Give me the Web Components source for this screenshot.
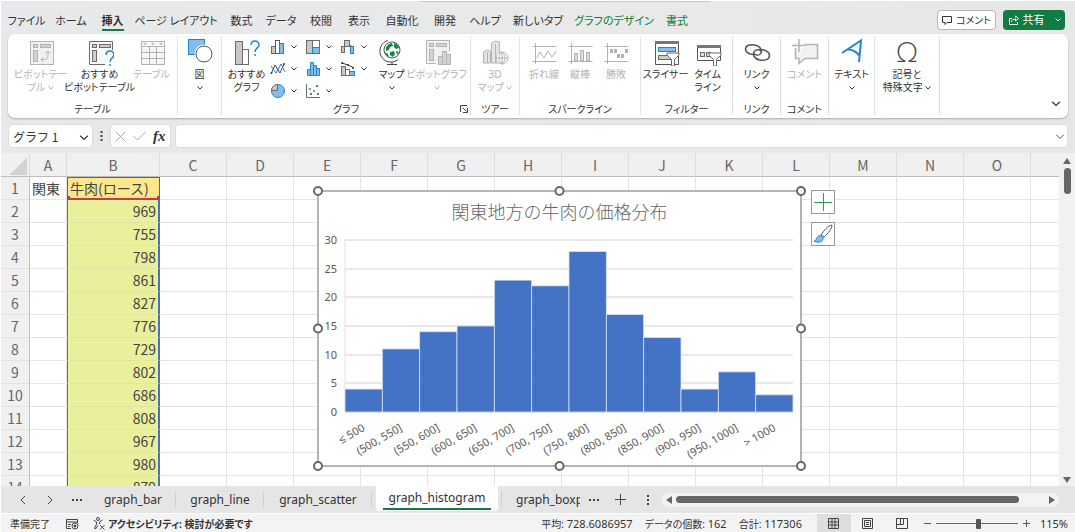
<!DOCTYPE html>
<html lang="ja">
<head>
<meta charset="utf-8">
<title>Excel</title>
<style>
html, body { margin: 0; height: 100%; background: #fff; }
body { font-family: "Noto Sans", "Noto Sans CJK JP", sans-serif; color: #333; }
</style>
</head>
<body>
<xl-app></xl-app>
<script>
const base = `
:host { display: block; box-sizing: border-box; }
*, *::before, *::after { box-sizing: border-box; }
button, input { font: inherit; color: inherit; margin: 0; padding: 0; border: 0; background: none; }
button { white-space: nowrap; }
svg { display: block; flex: none; }
`;
function define(name, css, html, setup) {
  customElements.define(name, class extends HTMLElement {
    constructor() {
      super();
      const root = this.attachShadow({ mode: 'open' });
      const t = document.createElement('template');
      t.innerHTML = `<style>${base}${css}</style>` + (typeof html === 'function' ? html(this) : html);
      root.append(t.content.cloneNode(true));
      if (setup) setup(root, this);
    }
  });
}

const G = '#6b6b6b', L = '#b3b3b3', B = '#1e86d4', BF = '#83bdec';
const help = (x, y) => `<path d="M${x} ${y + 4}c0-5 8-5.500 8 0 0 3-4 3-4 7" fill="none" stroke="${B}" stroke-width="1.500"/><circle cx="${x + 4}" cy="${y + 14}" r="1" fill="${B}"/>`;
const funnel = (x, y) => `<path d="M${x} ${y}h12v2l-4.500 4.500v6.500h-3v-6.500L${x} ${y + 2}z" fill="#fff" stroke="${G}"/>`;
const spark = inner => `<path d="M2.500 8.500h24M2.500 23.500h24M5.500 5v21" fill="none" stroke="${L}" stroke-width="1"/>${inner}`;

// Large command icons, 28 x 28
const big = {
  pivot: `<rect x="3.500" y="3.500" width="23" height="23" fill="#f1f1f1" stroke="${L}"/><g fill="#d2d2d2" stroke="${L}"><rect x="6.500" y="6.500" width="4" height="3"/><rect x="13.500" y="6.500" width="10" height="3"/><rect x="6.500" y="12.500" width="4" height="11"/></g><path d="M14 21.500h3c3 0 4-2 4-5v-3M18.500 15.500l2.500-2.500 2.500 2.500M16.500 19l-2.500 2.500 2.500 2.500" fill="none" stroke="${L}"/>`,
  pivotHelp: `<path d="M19 26.500H3.500v-23h23V12" fill="#f7f7f7" stroke="${G}"/><g fill="#cfcfcf" stroke="${G}"><rect x="6.500" y="6.500" width="4" height="3"/><rect x="13.500" y="6.500" width="11" height="3"/><rect x="6.500" y="12.500" width="4" height="11"/></g>${help(20, 13)}`,
  table: `<rect x="3.500" y="3.500" width="23" height="23" fill="#f7f7f7" stroke="${L}"/><path d="M3.500 8.500h23M3.500 14.500h23M3.500 20.500h23M11.500 8v18M18.500 8v18" stroke="${L}"/><path d="M5 5h4l-2 2zM13 5h4l-2 2zM21 5h4l-2 2z" fill="${L}"/>`,
  shapes: `<rect x="2.500" y="1.500" width="16" height="15" fill="${BF}" stroke="${B}"/><circle cx="18" cy="16" r="9.500" fill="#fff"/><circle cx="18" cy="16" r="8" fill="#fff" stroke="#555"/>`,
  chartHelp: `<rect x="2.500" y="3.500" width="7" height="23" fill="#c8c8c8" stroke="${G}"/><rect x="9.500" y="11.500" width="6" height="15" fill="#fff" stroke="${G}"/>${help(18, 3)}`,
  map: `<circle cx="14" cy="12" r="8" fill="#fff" stroke="#555"/><path d="M8 9l3-3 3-1 1 3-3 1-1 3-3 1zM16 5l4 2 1 3-3 1-2-2zM12 14l4-1 1 3-2 3-3-2zM18 13l3 1-2 3zM7 14l3 2 1 3-3-2z" fill="#138a43"/><path d="M10 2.500a11 11 0 1 0 10 19M14 24v2M9 26.500h10" fill="none" stroke="#444"/>`,
  pivotChart: `<path d="M13 25.500H3.500v-23h23V13" fill="#f1f1f1" stroke="${L}"/><g fill="#d2d2d2" stroke="${L}"><rect x="6.500" y="5.500" width="4" height="3"/><rect x="13.500" y="5.500" width="10" height="3"/><rect x="6.500" y="11.500" width="4" height="11"/><rect x="15.500" y="18.500" width="4" height="8"/><rect x="19.500" y="13.500" width="4" height="13"/><rect x="23.500" y="16.500" width="4" height="10"/></g>`,
  map3d: `<g fill="#e4e4e4" stroke="${L}"><path d="M2.500 14l3-2 4 1v12h-7zM10.500 5l4-2 4 1v21h-8zM14.500 6v19M6.500 14v11"/><circle cx="21" cy="20" r="6" fill="#fff"/><path d="M15 20h12M21 14v12M21 14c-4 4-4 8 0 12M21 14c4 4 4 8 0 12" fill="none"/></g>`,
  sparkLine: spark(`<path d="M7 20l3-6 4 6 4-7 4 6 4-6" fill="none" stroke="${L}"/>`),
  sparkColumn: spark(`<g fill="#ddd" stroke="${L}"><rect x="8.500" y="15.500" width="3" height="7"/><rect x="14.500" y="12.500" width="3" height="10"/><rect x="20.500" y="14.500" width="3" height="8"/></g>`),
  sparkWin: spark(`<g fill="${L}"><rect x="8" y="11" width="3" height="4"/><rect x="12" y="11" width="3" height="4"/><rect x="15" y="16" width="3" height="4"/><rect x="19" y="16" width="3" height="4"/><rect x="23" y="11" width="3" height="4"/></g>`),
  slicer: `<path d="M3.500 3.500h23v23h-23z" fill="#fff" stroke="#555"/><path d="M3 3h24v3H3z" fill="#777"/><rect x="6.500" y="9.500" width="17" height="4" fill="${BF}" stroke="${B}"/><rect x="6.500" y="17.500" width="12" height="4" fill="#ccc" stroke="${G}"/>${funnel(15, 15)}`,
  timeline: `<path d="M3.500 7.500h23v15h-23z" fill="#fff" stroke="#555"/><path d="M3 7h24v3H3z" fill="#777"/><g fill="#ddd" stroke="${G}"><rect x="6.500" y="14.500" width="4" height="4"/><rect x="12.500" y="14.500" width="4" height="4"/></g>${funnel(15, 15)}`,
  link: `<g fill="none" stroke="#555" stroke-width="1.500"><path d="M13 16.500C7 17 2.500 14.500 2.500 11S7 6 12 7s7.500 5 6 8-6 3-7.500 0"/><path d="M16 11.500c5-.5 10.500 2 10.500 6s-5 5.500-10 4.500-7-5-5.500-8 6-3 7.500-.5"/></g>`,
  comment: `<path d="M4.500 6.500h22v14H14l-6 5v-5H4.500z" fill="#f1f1f1" stroke="${L}" stroke-width="1.500"/><path d="M8 2v12M2 8h12" stroke="#fff" stroke-width="4"/><path d="M8 1v13M1 7.500h14" stroke="${L}" stroke-width="1.500"/>`,
  text: `<path d="M4 15L23 2.500 21 24M10 11.500c4 0 8 2 11.500 6" fill="none" stroke="${B}" stroke-width="2"/>`,
  omega: `<text x="14" y="24" text-anchor="middle" font-size="28" font-family="Lato, Noto Sans, sans-serif" font-weight="300" fill="#444">Ω</text>`
};
// Small icons, 16 x 16
const small = {
  column: `<rect x="1.500" y="7.500" width="4" height="7" fill="#c8c8c8" stroke="${G}"/><rect x="5.500" y="1.500" width="4" height="13" fill="#fff" stroke="#555"/><rect x="9.500" y="4.500" width="4" height="10" fill="${BF}" stroke="${B}"/>`,
  line: `<path d="M1 13l4-9 5 8 4-9" fill="none" stroke="#444"/><path d="M1 5l5 7 5-9 4 8" fill="none" stroke="${B}"/><g fill="#444"><circle cx="1.500" cy="12" r="1"/><circle cx="14" cy="3" r="1"/></g>`,
  pie: `<circle cx="8" cy="8" r="6.500" fill="${BF}" stroke="${B}"/><path d="M7.500 7.500v-6a6 6 0 0 0-6 6z" fill="#c8c8c8" stroke="${G}"/>`,
  tree: `<rect x="1.500" y="1.500" width="6" height="13" fill="#c8c8c8" stroke="${G}"/><rect x="7.500" y="1.500" width="7" height="7" fill="#fff" stroke="${G}"/><rect x="7.500" y="8.500" width="7" height="6" fill="${BF}" stroke="${B}"/>`,
  histo: `<path d="M2.500 14.500v-6h3v-7h3v3h3v3h3v7zM5.500 8v6M8.500 4v10M11.500 7v7" fill="${BF}" stroke="${B}"/>`,
  scatter: `<path d="M1.500 1v13.500H15" fill="none" stroke="${G}"/><g fill="#444"><circle cx="6" cy="11" r="1"/><circle cx="12" cy="3" r="1"/><circle cx="13" cy="11" r="1"/></g><g fill="${B}"><circle cx="5" cy="6" r="1"/><circle cx="9" cy="8" r="1"/></g>`,
  fall: `<path d="M3.500 7.500h2M9.500 6.500h2" fill="none" stroke="${G}"/><rect x="1.500" y="7.500" width="3" height="6" fill="#c8c8c8" stroke="${G}"/><rect x="4.500" y="1.500" width="5" height="6" fill="#c8c8c8" stroke="${G}"/><path d="M9.500 1.500v6h2" fill="none" stroke="${G}"/><rect x="10.500" y="7.500" width="3" height="7" fill="${BF}" stroke="${B}"/>`,
  combo: `<rect x="1.500" y="5.500" width="4" height="9" fill="#c8c8c8" stroke="${G}"/><rect x="5.500" y="8.500" width="4" height="6" fill="#fff" stroke="${G}"/><rect x="9.500" y="10.500" width="5" height="4" fill="${BF}" stroke="${B}"/><path d="M2 2l6 2 6 3" fill="none" stroke="#333"/><g fill="#333"><circle cx="2" cy="2" r="1"/><circle cx="8" cy="4" r="1"/><circle cx="13" cy="7" r="1"/></g>`
};
const svg = (size, body) => `<svg width="${size}" height="${size}" viewBox="0 0 ${size} ${size}" aria-hidden="true">${body}</svg>`;
const chev = (w = 6) => `<svg width="${w}" height="${w / 2 + 1}" viewBox="0 0 6 4" aria-hidden="true" style="display:inline-block;vertical-align:middle"><path d="M.5.5L3 3 5.500.5" fill="none" stroke="currentColor" stroke-width="${w > 6 ? .8 : 1}"/></svg>`;

define('xl-tabs', `
:host { display: flex; justify-content: space-between; height: 33px; padding: 9px 10px 3px 2px; font-size: 11px; line-height: 16px; }
nav { display: grid; grid-template-columns: 47px 42px 41px 86px 45px 34px 46px 30px 56px 30px 50px 56px 96px 30px; font-feature-settings: "palt"; justify-items: center; align-items: center; }
a { color: #333; text-decoration: none; white-space: nowrap; border-bottom: 2px solid transparent; margin-top: 3px; }
a[aria-current] { font-weight: 700; border-color: #107c41; }
a.ctx { color: #107c41; }
.end { display: flex; gap: 7px; font-feature-settings: "palt"; }
.end button { display: flex; align-items: center; justify-content: center; gap: 4px; height: 20px; border-radius: 4px; }
.note { width: 59px; background: #fff; border: 1px solid #b5b5b5; font-size: 10px; }
.share { width: 62px; background: #107c41; color: #fff; }
.share span { margin-right: 6px; }
`, () => `<nav aria-label="リボン">${['ファイル','ホーム','挿入','ページ レイアウト','数式','データ','校閲','表示','自動化','開発','ヘルプ','新しいタブ','グラフのデザイン','書式'].map((t, i) => `<a href="#"${i === 2 ? ' aria-current="page"' : ''}${i > 11 ? ' class="ctx"' : ''}>${t}</a>`).join('')}</nav>
<div class="end"><button class="note"><svg width="10" height="10" viewBox="0 0 10 10"><path d="M.5 1.500h9v6H5l-2 2v-2H.5z" fill="none" stroke="#333"/></svg>コメント</button>
<button class="share"><svg width="11" height="11" viewBox="0 0 11 11"><path d="M4 3.500H1.500v6h8V7M3.500 7c0-2 2-3 4-3V6l3-2.500-3-2.500v1.500" fill="none" stroke="#fff"/></svg><span>共有</span>${chev()}</button></div>`);

define('xl-command', `
:host { flex: none; width: var(--w, 40px); }
button { display: flex; flex-direction: column; align-items: center; gap: 2px; width: 100%; font-size: 10px; line-height: 13px; font-feature-settings: "palt"; }
button:disabled { color: #b3b3b3; }
`, el => `<button${el.hasAttribute('off') ? ' disabled' : ''}>${svg(28, big[el.getAttribute('icon')])}<span><slot></slot>${el.hasAttribute('menu') ? (el.getAttribute('menu') === 'below' ? '<br>' : ' ') + chev() : ''}</span></button>`);

define('xl-mini', `
button { display: flex; align-items: center; gap: 5px; width: 35px; height: 22px; }
`, el => `<button aria-label="${el.getAttribute('label')}">${svg(16, small[el.getAttribute('icon')])}${chev()}</button>`);

define('xl-group', `
:host { flex: none; display: flex; flex-direction: column; justify-content: space-between; position: relative; height: 78px; margin-top: 3px; width: var(--w); border-right: 1px solid #e1e1e1; }
.row { display: flex; justify-content: center; padding-top: 1px; }
footer { font-size: 10px; line-height: 13px; text-align: center; font-feature-settings: "palt"; height: 13px; margin-bottom: -1px; white-space: nowrap; }
.launch { position: absolute; right: 2px; bottom: 2px; }
`, el => `<div class="row"><slot></slot></div><footer>${el.getAttribute('label') || ''}</footer>${el.hasAttribute('launcher') ? `<button class="launch" aria-label="詳細"><svg width="8" height="8" viewBox="0 0 8 8"><path d="M.5 7V.5H7M2.500 2.500l4 4M7.500 3v4.500H3" fill="none" stroke="#444"/></svg></button>` : ''}`);

define('xl-ribbon', `
:host { display: flex; height: 84px; margin: 0 7px; background: #fff; border-radius: 7px; box-shadow: 0 1px 2px #0004; }
.minis { display: grid; grid-template-rows: repeat(3, 22px); grid-auto-flow: column; margin: -2px 0 0 4px; }
.fold { margin: auto 7px 5px auto; }
`, `
<xl-group label="テーブル" style="--w:170px">
 <xl-command icon="pivot" off menu style="--w:50px">ピボットテー<br>ブル</xl-command>
 <xl-command icon="pivotHelp" style="--w:68px">おすすめ<br>ピボットテーブル</xl-command>
 <xl-command icon="table" off style="--w:36px">テーブル</xl-command>
</xl-group>
<xl-group style="--w:44px"><xl-command icon="shapes" menu="below">図</xl-command></xl-group>
<xl-group label="グラフ" launcher style="--w:249px">
 <xl-command icon="chartHelp" style="--w:38px">おすすめ<br>グラフ</xl-command>
 <div class="minis">
  <xl-mini icon="column" label="縦棒"></xl-mini><xl-mini icon="line" label="折れ線"></xl-mini><xl-mini icon="pie" label="円"></xl-mini>
  <xl-mini icon="tree" label="階層構造"></xl-mini><xl-mini icon="histo" label="統計"></xl-mini><xl-mini icon="scatter" label="散布図"></xl-mini>
  <xl-mini icon="fall" label="ウォーターフォール"></xl-mini><xl-mini icon="combo" label="複合"></xl-mini>
 </div>
 <xl-command icon="map" menu="below" style="--w:34px">マップ</xl-command>
 <xl-command icon="pivotChart" off menu="below" style="--w:56px">ピボットグラフ</xl-command>
</xl-group>
<xl-group label="ツアー" style="--w:49px"><xl-command icon="map3d" off menu>3D<br>マップ</xl-command></xl-group>
<xl-group label="スパークライン" style="--w:121px">
 <xl-command icon="sparkLine" off style="--w:36px">折れ線</xl-command><xl-command icon="sparkColumn" off style="--w:36px">縦棒</xl-command><xl-command icon="sparkWin" off style="--w:36px">勝敗</xl-command>
</xl-group>
<xl-group label="フィルター" style="--w:92px"><xl-command icon="slicer" style="--w:42px">スライサー</xl-command><xl-command icon="timeline" style="--w:42px">タイム<br>ライン</xl-command></xl-group>
<xl-group label="リンク" style="--w:48px"><xl-command icon="link" menu="below">リンク</xl-command></xl-group>
<xl-group label="コメント" style="--w:48px"><xl-command icon="comment" off>コメント</xl-command></xl-group>
<xl-group style="--w:46px"><xl-command icon="text" menu="below">テキスト</xl-command></xl-group>
<xl-group style="--w:65px"><xl-command icon="omega" menu>記号と<br>特殊文字</xl-command></xl-group>
<button class="fold" aria-label="リボンを折りたたむ">${chev(10)}</button>`);

define('xl-formula-bar', `
:host { display: flex; align-items: center; height: 35px; padding: 1px 7px 0; font-size: 12px; }
.box { display: flex; align-items: center; height: 24px; background: #fff; border: 1px solid #dcdcdc; border-radius: 4px; }
.name { width: 85px; padding: 0 3px 0 4px; font-family: "Noto Sans CJK JP", sans-serif; }
.name input { flex: 1; min-width: 0; }
.dots { width: 17px; display: flex; justify-content: center; }
.fn { width: 61px; justify-content: space-around; padding: 0 1px; }
.fx { font: italic 700 15px/20px "Liberation Serif", serif; color: #333; }
.formula { flex: 1; margin-left: 4px; padding: 0 2px 0 8px; color: #999; }
.formula input { flex: 1; min-width: 0; }
`, `<div class="box name"><input aria-label="名前ボックス" value="グラフ 1"><button aria-label="名前の一覧">${chev(10)}</button></div>
<div class="dots"><svg width="3" height="12" viewBox="0 0 3 12"><path d="M.5 1h2v2h-2zM.5 5h2v2h-2zM.5 9h2v2h-2z" fill="#444"/></svg></div>
<div class="box fn"><button aria-label="キャンセル"><svg width="11" height="11" viewBox="0 0 11 11"><path d="M.5.5l10 10M10.500.5l-10 10" stroke="#aaa"/></svg></button>
<button aria-label="入力"><svg width="13" height="10" viewBox="0 0 13 10"><path d="M.5 5l4 4 8-8" fill="none" stroke="#aaa"/></svg></button><button class="fx" aria-label="関数の挿入">fx</button></div>
<div class="box formula"><input aria-label="数式バー"><button aria-label="展開">${chev(10)}</button></div>`);

define('xl-chart', `
svg { width: 100%; height: auto; overflow: visible; }
text { font-family: "Noto Sans", sans-serif; font-size: 11px; fill: #595959; }
text.title { font-family: "Noto Sans CJK JP", sans-serif; font-size: 18px; font-weight: 300; fill: #666; }
`, () => {
  const data = [['≤ 500', 4], ['(500, 550]', 11], ['(550, 600]', 14], ['(600, 650]', 15], ['(650, 700]', 23], ['(700, 750]', 22], ['(750, 800]', 28], ['(800, 850]', 17], ['(850, 900]', 13], ['(900, 950]', 4], ['(950, 1000]', 7], ['> 1000', 3]];
  const W = 483, H = 275, x0 = 27, x1 = 475, y0 = 221, unit = 172 / 30, bw = (x1 - x0) / data.length;
  let s = `<rect x="0" y="0" width="${W}" height="${H}" fill="#fff" stroke="#9a9a9a" stroke-width="1.500"/><text class="title" x="${W / 2}" y="28" text-anchor="middle">関東地方の牛肉の価格分布</text>`;
  for (let v = 0; v <= 30; v += 5) {
    const y = Math.round(y0 - v * unit);
    s += `<path d="M${x0} ${y}H${x1}" stroke="#e0e0e0" stroke-width="1.500"/><text x="19" y="${y + 4}" text-anchor="end">${v}</text>`;
  }
  s += `<path d="M${x0} 49V${y0}" stroke="#e0e0e0"/>`;
  data.forEach(([label, v], i) => {
    const x = x0 + i * bw, h = v * unit;
    s += `<rect x="${x}" y="${y0 - h}" width="${bw}" height="${h}" fill="#4472c4" stroke="#dbe4f3" stroke-width=".8"/>`;
    s += `<text transform="translate(${x + bw / 2 + 2} 239) rotate(-30)" text-anchor="end">${label}</text>`;
  });
  for (const x of [0, W / 2, W]) for (const y of [0, H / 2, H])
    if (x !== W / 2 || y !== H / 2) s += `<circle cx="${x}" cy="${y}" r="4" fill="#fff" stroke="#666" stroke-width="2"/>`;
  return `<svg viewBox="0 0 ${W} ${H}" role="img" aria-label="ヒストグラム">${s}</svg>`;
});

define('xl-sheet', `
:host { display: flex; flex: 1; min-height: 0; }
.view { position: relative; flex: 1; min-width: 0; overflow: hidden; background: #fff; font-family: "Noto Sans CJK JP", sans-serif; }
table { border-collapse: separate; border-spacing: 0; table-layout: fixed; width: 1097px; font-size: 14px; line-height: 22px; }
th { font-weight: 400; color: #666; background: #f0f0f0; padding: 0; border-right: 1px solid #dcdcdc; border-bottom: 1px solid #e2e2e2; height: 23px; }
thead th { height: 24px; border-bottom-color: #bdbdbd; }
tbody th { border-right-color: #bdbdbd; }
td { height: 23px; padding: 0 2px; border-right: 1px solid #e4e4e4; border-bottom: 1px solid #e4e4e4; white-space: nowrap; color: #444; }
td.b { background: #eaef9b; text-align: right; border-right: 2px solid #4472c4; border-left: 1px solid #4472c4; border-bottom-color: #e0e4a6; }
td.b.head { text-align: left; border: 1px solid #c8384a; border-bottom-width: 2px; line-height: 20px;
  background: linear-gradient(#c8384a, #c8384a) left bottom / 3px 4px no-repeat border-box, linear-gradient(#c8384a, #c8384a) right bottom / 3px 4px no-repeat border-box, #fbe88d; }
.corner { display: block; margin: 4px 2px 1px auto; width: 18px; height: 18px; background: linear-gradient(135deg, transparent 50%, #d2d2d2 50%); }
xl-chart { position: absolute; left: 317px; top: 38px; width: 483px; }
.tools { position: absolute; left: 810px; top: 37px; display: grid; gap: 8px; }
.tools button { display: grid; place-items: center; width: 24px; height: 24px; background: #fff; border: 1px solid #999; }
.scroll { width: 16px; display: flex; flex-direction: column; align-items: center; background: #f1f1f1; padding: 5px 0 3px; }
.thumb { width: 7px; height: 26px; margin-top: 4px; border-radius: 4px; background: #666; }
.down { margin-top: auto; }
`, () => {
  const cols = [...'ABCDEFGHIJKLMNO', ''];
  const vals = [969, 755, 798, 861, 827, 776, 729, 802, 686, 808, 967, 980, 879];
  const rest = '<td></td>'.repeat(14);
  return `<div class="view"><table><colgroup><col style="width:29px"><col style="width:37px"><col style="width:93px">${'<col style="width:67px">'.repeat(14)}</colgroup>
<thead><tr><th><span class="corner"></span></th>${cols.map(c => `<th>${c}</th>`).join('')}</tr></thead>
<tbody><tr><th>1</th><td>関東</td><td class="b head">牛肉(ロース)</td>${rest}</tr>
${vals.map((v, i) => `<tr><th>${i + 2}</th><td></td><td class="b">${v}</td>${rest}</tr>`).join('')}</tbody></table>
<xl-chart></xl-chart>
<div class="tools"><button aria-label="グラフ要素"><svg width="20" height="20" viewBox="0 0 20 20"><path d="M10.500 1v18M1 10.500h18" stroke="#2e9b4f" stroke-width="1"/></svg></button>
<button aria-label="グラフ スタイル"><svg width="20" height="20" viewBox="0 0 20 20"><path d="M8 11C11 6 15 2 19 1c0 4-4 8-8 12z" fill="#fff" stroke="#555"/><path d="M1 17c3 0 2-5 6-5.500 2 0 4 2 3 4-1 3-6 3.500-9 1.500z" fill="${BF}" stroke="${B}"/></svg></button></div></div>
<div class="scroll"><svg width="8" height="6" viewBox="0 0 8 6"><path d="M4 0l4 6H0z" fill="#666"/></svg><div class="thumb"></div><svg class="down" width="8" height="6" viewBox="0 0 8 6"><path d="M4 6L0 0h8z" fill="#666"/></svg></div>`;
});

define('xl-sheet-tabs', `
:host { display: flex; align-items: center; height: 27px; padding-right: 16px; font-size: 12px; line-height: 16px; background: #e5e5e5; }
.nav { display: flex; width: 89px; padding-left: 9px; }
.nav button { width: 27px; display: grid; place-items: center; }
a { color: #333; text-decoration: none; text-align: center; height: 27px; line-height: 28px; flex: none; position: relative; }
a::after { content: ""; position: absolute; right: 0; top: 6px; height: 15px; border-right: 1px solid #cfcfcf; }
.now { height: 25px; margin: -2px 4px 0; background: #fff; border-radius: 0 0 4px 4px; padding: 2px 7px 0; line-height: 20px; }
.now span { display: block; border-bottom: 2px solid #107c41; }
.now::after { right: -4px; }
.cut { width: 78px; overflow: hidden; text-align: left; padding-left: 14px; }
.cut::after { content: none; }
.more { width: 27px; display: grid; place-items: center; }
.bar { flex: 1; height: 14px; margin-left: 1px; border-radius: 7px; background: #f3f3f3; display: flex; align-items: center; padding: 0 4px; gap: 4px; }
.thumb { height: 7px; border-radius: 4px; background: #666; flex: 1; margin-right: 26px; }
`, `<div class="nav"><button aria-label="前へ"><svg width="6" height="10" viewBox="0 0 6 10"><path d="M5 1L1 5l4 4" fill="none" stroke="#444"/></svg></button><button aria-label="次へ"><svg width="6" height="10" viewBox="0 0 6 10"><path d="M1 1l4 4-4 4" fill="none" stroke="#444"/></svg></button><button aria-label="前のシート"><svg width="10" height="2" viewBox="0 0 10 2"><path d="M0 0h2v2H0zM4 0h2v2H4zM8 0h2v2H8z" fill="#444"/></svg></button></div>
<a href="#" style="width:86px">graph_bar</a><a href="#" style="width:88px">graph_line</a><a href="#" style="width:108px">graph_scatter</a><a href="#" class="now" aria-current="page" style="width:122px"><span>graph_histogram</span></a><a href="#" class="cut">graph_boxplot</a>
<button class="more" aria-label="次のシート"><svg width="10" height="2" viewBox="0 0 10 2"><path d="M0 0h2v2H0zM4 0h2v2H4zM8 0h2v2H8z" fill="#444"/></svg></button>
<button class="more" aria-label="新しいシート"><svg width="11" height="11" viewBox="0 0 11 11"><path d="M5.500 0v11M0 5.500h11" stroke="#444"/></svg></button>
<div class="more"><svg width="2" height="10" viewBox="0 0 2 10"><path d="M0 0h2v2H0zM0 4h2v2H0zM0 8h2v2H0z" fill="#444"/></svg></div>
<div class="bar"><svg width="6" height="8" viewBox="0 0 6 8"><path d="M0 4l6-4v8z" fill="#666"/></svg><div class="thumb"></div><svg width="6" height="8" viewBox="0 0 6 8"><path d="M6 4L0 0v8z" fill="#666"/></svg></div>`);

define('xl-status', `
:host { display: flex; align-items: center; height: 18px; padding: 1px 7px 0 9px; font-size: 11px; line-height: 16px; background: #f3f3f3; white-space: nowrap; font-feature-settings: "palt"; }
.ja { font-size: 10px; }
.rec { margin: 0 14px 0 16px; }
.a11y { display: flex; align-items: center; gap: 3px; font-weight: 700; font-size: 10px; }
.stats { margin-left: auto; display: flex; gap: 12px; }
.views { display: flex; margin: -1px 5px 0 15px; }
.views button { width: 34px; height: 18px; display: grid; place-items: center; }
.views .on { background: #dedede; }
.zoom { display: flex; align-items: center; gap: 5px; }
input { appearance: none; width: 82px; height: 12px; background: linear-gradient(#666, #666) center / 100% 1px no-repeat; }
input::-webkit-slider-thumb { appearance: none; width: 5px; height: 10px; border-radius: 1px; background: #555; }
.pct { margin-left: 10px; }
`, `<span class="ja">準備完了</span><button class="rec" aria-label="マクロの記録"><svg width="13" height="12" viewBox="0 0 13 12"><path d="M5 10.500H.5V1.500h11V5M.5 4h11M2 6.500h3M2 8.500h2" fill="none" stroke="#444"/><circle cx="9" cy="8" r="3" fill="#fff" stroke="#444"/><circle cx="9" cy="8" r="1.500" fill="#444"/></svg></button>
<button class="a11y"><svg width="12" height="13" viewBox="0 0 12 13"><circle cx="5" cy="2" r="1.500" fill="none" stroke="#444"/><path d="M.5 3l3 2v2l-2 4.500 1 .5L5 8.500M9.500 3l-3 2v2M7 8l4.500 4.500M11.500 8L7 12.500" fill="none" stroke="#444"/></svg><span>アクセシビリティ: 検討が必要です</span></button>
<div class="stats"><span><span class="ja">平均:</span> 728.6086957</span><span><span class="ja">データの個数:</span> 162</span><span><span class="ja">合計:</span> 117306</span></div>
<div class="views"><button class="on" aria-label="標準"><svg width="11" height="11" viewBox="0 0 11 11"><path d="M.5.5h10v10H.5zM.5 4h10M.5 7h10M4 .5v10M7 .5v10" fill="none" stroke="#444"/></svg></button><button aria-label="ページ レイアウト"><svg width="11" height="11" viewBox="0 0 11 11"><path d="M.5.5h10v10H.5zM2.500 2.500h6v6h-6zM4 4.500h3M4 6.500h3" fill="none" stroke="#444"/></svg></button><button aria-label="改ページ プレビュー"><svg width="12" height="11" viewBox="0 0 12 11"><path d="M.5.5h11v10H.5zM4.500.5v6M.5 6.500h7v-6" fill="none" stroke="#444"/></svg></button></div>
<div class="zoom"><button aria-label="縮小"><svg width="7" height="7" viewBox="0 0 7 7"><path d="M0 3.500h7" stroke="#555"/></svg></button><input type="range" min="10" max="210" value="115" aria-label="ズーム"><button aria-label="拡大"><svg width="7" height="7" viewBox="0 0 7 7"><path d="M0 3.500h7M3.500 0v7" stroke="#555"/></svg></button></div><span class="pct">115%</span>`);

define('xl-app', `
:host { display: flex; flex-direction: column; height: 100vh; padding: 1px 0 0 1px; background: #fff; overflow: hidden; }
.chrome { background: linear-gradient(100deg, #e6e8eb, #e9e9e8 60%, #e7e7e8); position: relative; }
.chrome::before { content: ""; position: absolute; left: 39%; right: 34%; top: 0; height: 1px; background: #c9ccc6; }
xl-status { margin-top: 1px; }
`, `<div class="chrome"><xl-tabs></xl-tabs><xl-ribbon></xl-ribbon><xl-formula-bar></xl-formula-bar></div><xl-sheet></xl-sheet><xl-sheet-tabs></xl-sheet-tabs><xl-status></xl-status>`);
</script>
</body>
</html>
